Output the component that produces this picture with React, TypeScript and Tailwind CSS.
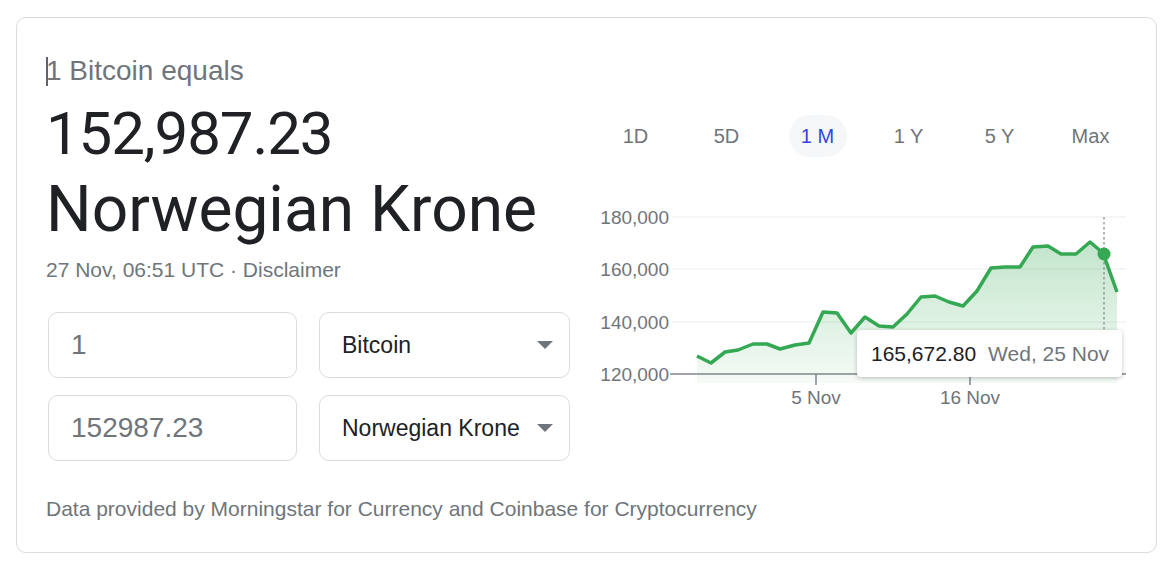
import React from "react";

const pts: [number, number][] = [
  [697, 356], [711, 363], [725, 352], [738, 350], [753, 344], [767, 344], [780, 349],
  [795, 345], [809, 343], [823, 312], [837, 313], [851, 333], [865, 317], [879, 326],
  [893, 327], [907, 314], [921, 297], [935, 296], [949, 302], [963, 306], [977, 291],
  [991, 268], [1005, 267], [1020, 267], [1033, 247], [1048, 246], [1061, 254], [1076, 254],
  [1090, 242], [1103, 253], [1117, 292],
];

const linePath = pts.map((p, i) => `${i === 0 ? "M" : "L"}${p[0]},${p[1]}`).join(" ");
const fillPath = `${linePath} L1117,383 L697,383 Z`;

const ranges = ["1D", "5D", "1 M", "1 Y", "5 Y", "Max"];

function Caret() {
  return (
    <svg width="16" height="8" viewBox="0 0 16 8" className="shrink-0">
      <path d="M0 0 L16 0 L8 8 Z" fill="#70757a" />
    </svg>
  );
}

export default function App() {
  const sans = { fontFamily: '"Liberation Sans", Arial, sans-serif' };
  return (
    <div className="bg-white w-[1173px] h-[570px] pt-[17px] pl-4" style={sans}>
      <div className="w-[1141px] h-[536px] border border-[#dadce0] rounded-[10px] flex">
        {/* Left column */}
        <div className="w-[573px] pl-[29px] pt-[35px] flex flex-col">
          <div className="h-9 flex items-center text-[28px] text-[#70757a] leading-9">
            <span className="inline-block w-[2px] h-[29px] bg-[#5f6368] -mr-[2px]"></span>
            <span>1 Bitcoin equals</span>
          </div>
          <div
            className="mt-[7px] text-[#202124]"
            style={{ fontFamily: 'Roboto, "Liberation Sans", sans-serif' }}
          >
            <div className="text-[60px] leading-[76px] tracking-[-1.1px]">152,987.23</div>
            <div className="text-[64px] leading-[76px]">Norwegian Krone</div>
          </div>
          <div className="mt-2 text-[21px] leading-7 text-[#70757a]">
            27 Nov, 06:51 UTC · <span>Disclaimer</span>
          </div>
          <div className="mt-7 ml-[2px] flex flex-col gap-[17px]">
            <div className="flex gap-[22px]">
              <div className="w-[249px] h-[66px] border border-[#dadce0] rounded-[10px] flex items-center pl-[22px] text-[28px] text-[#70757a]">
                1
              </div>
              <div className="w-[251px] h-[66px] border border-[#dadce0] rounded-[10px] flex items-center justify-between pl-[22px] pr-[16px] text-[23px] text-[#202124]">
                <span>Bitcoin</span>
                <Caret />
              </div>
            </div>
            <div className="flex gap-[22px]">
              <div className="w-[249px] h-[66px] border border-[#dadce0] rounded-[10px] flex items-center pl-[22px] text-[28px] text-[#70757a]">
                152987.23
              </div>
              <div className="w-[251px] h-[66px] border border-[#dadce0] rounded-[10px] flex items-center justify-between pl-[22px] pr-[16px] text-[23px] text-[#202124]">
                <span>Norwegian Krone</span>
                <Caret />
              </div>
            </div>
          </div>
          <div className="mt-[34px] text-[21px] leading-7 text-[#70757a] whitespace-nowrap">
            Data provided by Morningstar for Currency and Coinbase for Cryptocurrency
          </div>
        </div>

        {/* Right column */}
        <div className="relative w-[550px] pt-[97px] flex flex-col">
          <div className="flex h-[42px]">
            {ranges.map((r) => (
              <div key={r} className="w-[91px] flex items-center justify-center">
                {r === "1 M" ? (
                  <div className="w-[58px] h-[42px] rounded-full bg-[#f6f7f9] flex items-center justify-center text-[20px] text-[#3346e3]">
                    {r}
                  </div>
                ) : (
                  <span className="text-[20px] text-[#70757a]">{r}</span>
                )}
              </div>
            ))}
          </div>
          <svg
            className="mt-[38px] block"
            width="550"
            height="220"
            viewBox="590 195 550 220"
            style={sans}
          >
            <defs>
              <linearGradient id="g" x1="0" y1="0" x2="0" y2="1">
                <stop offset="0%" stopColor="#34a853" stopOpacity="0.3" />
                <stop offset="100%" stopColor="#34a853" stopOpacity="0.05" />
              </linearGradient>
            </defs>
            {[217, 269, 322].map((y) => (
              <line key={y} x1="672" x2="1126" y1={y} y2={y} stroke="#f1f3f4" strokeWidth="1.5" />
            ))}
            <path d={fillPath} fill="url(#g)" />
            <line x1="670" x2="1126" y1="374" y2="374" stroke="#80868b" strokeWidth="1.5" />
            <line x1="816" x2="816" y1="374" y2="385" stroke="#80868b" strokeWidth="1.5" />
            <line x1="970" x2="970" y1="374" y2="385" stroke="#80868b" strokeWidth="1.5" />
            <line x1="1104" x2="1104" y1="217" y2="374" stroke="#80868b" strokeWidth="1.2" strokeDasharray="2.5 2.5" />
            <path d={linePath} fill="none" stroke="#34a853" strokeWidth="3.5" strokeLinejoin="round" />
            <circle cx="1104" cy="254" r="6.5" fill="#34a853" />
            {[
              [217, "180,000"],
              [269, "160,000"],
              [322, "140,000"],
              [374, "120,000"],
            ].map(([y, t]) => (
              <text key={t as string} x="669" y={(y as number) + 6.5} textAnchor="end" fontSize="19" fill="#70757a">
                {t}
              </text>
            ))}
            <text x="816" y="404" textAnchor="middle" fontSize="19" fill="#70757a">5 Nov</text>
            <text x="970" y="404" textAnchor="middle" fontSize="19" fill="#70757a">16 Nov</text>
          </svg>
          <div className="absolute left-[267px] top-[312px] w-[265px] h-[47px] bg-white rounded-[4px] shadow-[0_1px_4px_rgba(0,0,0,0.25)] flex items-center pl-[14px] gap-[12px] text-[21px]">
            <span className="text-[#202124]">165,672.80</span>
            <span className="text-[#70757a]">Wed, 25 Nov</span>
          </div>
        </div>
      </div>
    </div>
  );
}
